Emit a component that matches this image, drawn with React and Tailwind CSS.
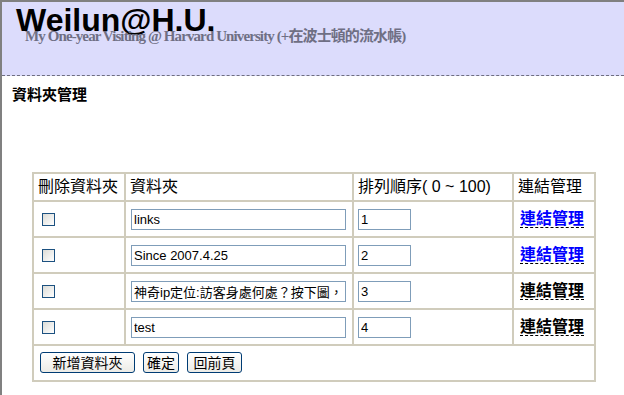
const FOLDERS = [
  { name: 'links', order: '1', linkColor: 'text-[#0000ff]' },
  { name: 'Since 2007.4.25', order: '2', linkColor: 'text-[#0000ff]' },
  { name: '神奇ip定位:訪客身處何處？按下圖，:', order: '3', linkColor: 'text-black' },
  { name: 'test', order: '4', linkColor: 'text-black' },
]

const CJK = "font-['Liberation_Sans','Noto_Sans_CJK_TC',sans-serif]"

function Checkbox() {
  return (
    <span className="block w-[13px] h-[13px] border border-[#1c5180] bg-gradient-to-br from-[#dcdcd7] to-[#ffffff]" />
  )
}

function XpButton({ children, className = '' }) {
  return (
    <button
      type="button"
      className={`h-[21px] rounded-[3px] border border-[#003c74] bg-gradient-to-b from-white to-[#ecebe6] text-[14px] leading-none text-black ${CJK} ${className}`}
    >
      {children}
    </button>
  )
}

function FolderRow({ folder }) {
  return (
    <tr className="h-[36px]">
      <td className="border-2 border-[#d0ccbc] pl-[8px]">
        <Checkbox />
      </td>
      <td className="border-2 border-[#d0ccbc] pl-[5px]">
        <input
          readOnly
          value={folder.name}
          className={`block w-[215px] h-[21px] border border-[#7f9db9] px-[2px] text-[13px] text-black outline-none ${CJK}`}
        />
      </td>
      <td className="border-2 border-[#d0ccbc] pl-[4px]">
        <input
          readOnly
          value={folder.order}
          className="block w-[53px] h-[21px] border border-[#7f9db9] px-[2px] text-[13px] text-black outline-none font-['Liberation_Sans',sans-serif]"
        />
      </td>
      <td className="border-2 border-[#d0ccbc] pl-[6px]">
        <a className={`inline-block border-b border-dashed border-black text-[16px] font-bold leading-[17px] ${folder.linkColor} ${CJK}`}>
          連結管理
        </a>
      </td>
    </tr>
  )
}

export default function App() {
  return (
    <div className="w-[624px] h-[395px] overflow-hidden bg-white border-t-2 border-l-2 border-[#808080]">
      {/* Header */}
      <div className="h-[74px] bg-[#dcdcfc] border-b border-dashed border-[#6e6e80] relative">
        <div className="pl-[14px] pt-[1px] text-[32px] font-bold leading-[34px] text-black font-['Liberation_Sans',sans-serif]">
          Weilun@H.U.
        </div>
        <div className="absolute left-[23px] top-[25px] text-[15px] tracking-[-0.9px] font-bold leading-[18px] text-[#6f6f84] font-['Liberation_Serif','Noto_Sans_CJK_TC',serif]">
          My One-year Visiting @ Harvard University (+在波士頓的流水帳)
        </div>
      </div>

      <h1 className={`pl-[10px] pt-[10px] text-[15px] font-bold leading-[17px] text-black ${CJK}`}>
        資料夾管理
      </h1>

      <table className={`ml-[30px] mt-[69px] w-[562px] table-fixed border-collapse border-2 border-[#d0ccbc] text-[16px] text-black ${CJK}`}>
        <colgroup>
          <col className="w-[92px]" />
          <col className="w-[228px]" />
          <col className="w-[160px]" />
          <col className="w-[82px]" />
        </colgroup>
        <thead>
          <tr className="h-[28px]">
            <th className="border-2 border-[#d0ccbc] pl-[4px] text-left font-normal">刪除資料夾</th>
            <th className="border-2 border-[#d0ccbc] pl-[4px] text-left font-normal">資料夾</th>
            <th className="border-2 border-[#d0ccbc] pl-[4px] text-left font-normal whitespace-nowrap">排列順序( 0 ~ 100)</th>
            <th className="border-2 border-[#d0ccbc] pl-[4px] text-left font-normal">連結管理</th>
          </tr>
        </thead>
        <tbody>
          {FOLDERS.map(f => (
            <FolderRow key={f.order} folder={f} />
          ))}
          <tr className="h-[36px]">
            <td colSpan={4} className="border-2 border-[#d0ccbc] pl-[6px] pt-[6px] pb-[7px] align-top">
              <div className="flex gap-[8px]">
                <XpButton className="w-[95px]">新增資料夾</XpButton>
                <XpButton className="w-[36px]">確定</XpButton>
                <XpButton className="w-[55px]">回前頁</XpButton>
              </div>
            </td>
          </tr>
        </tbody>
      </table>
    </div>
  )
}
